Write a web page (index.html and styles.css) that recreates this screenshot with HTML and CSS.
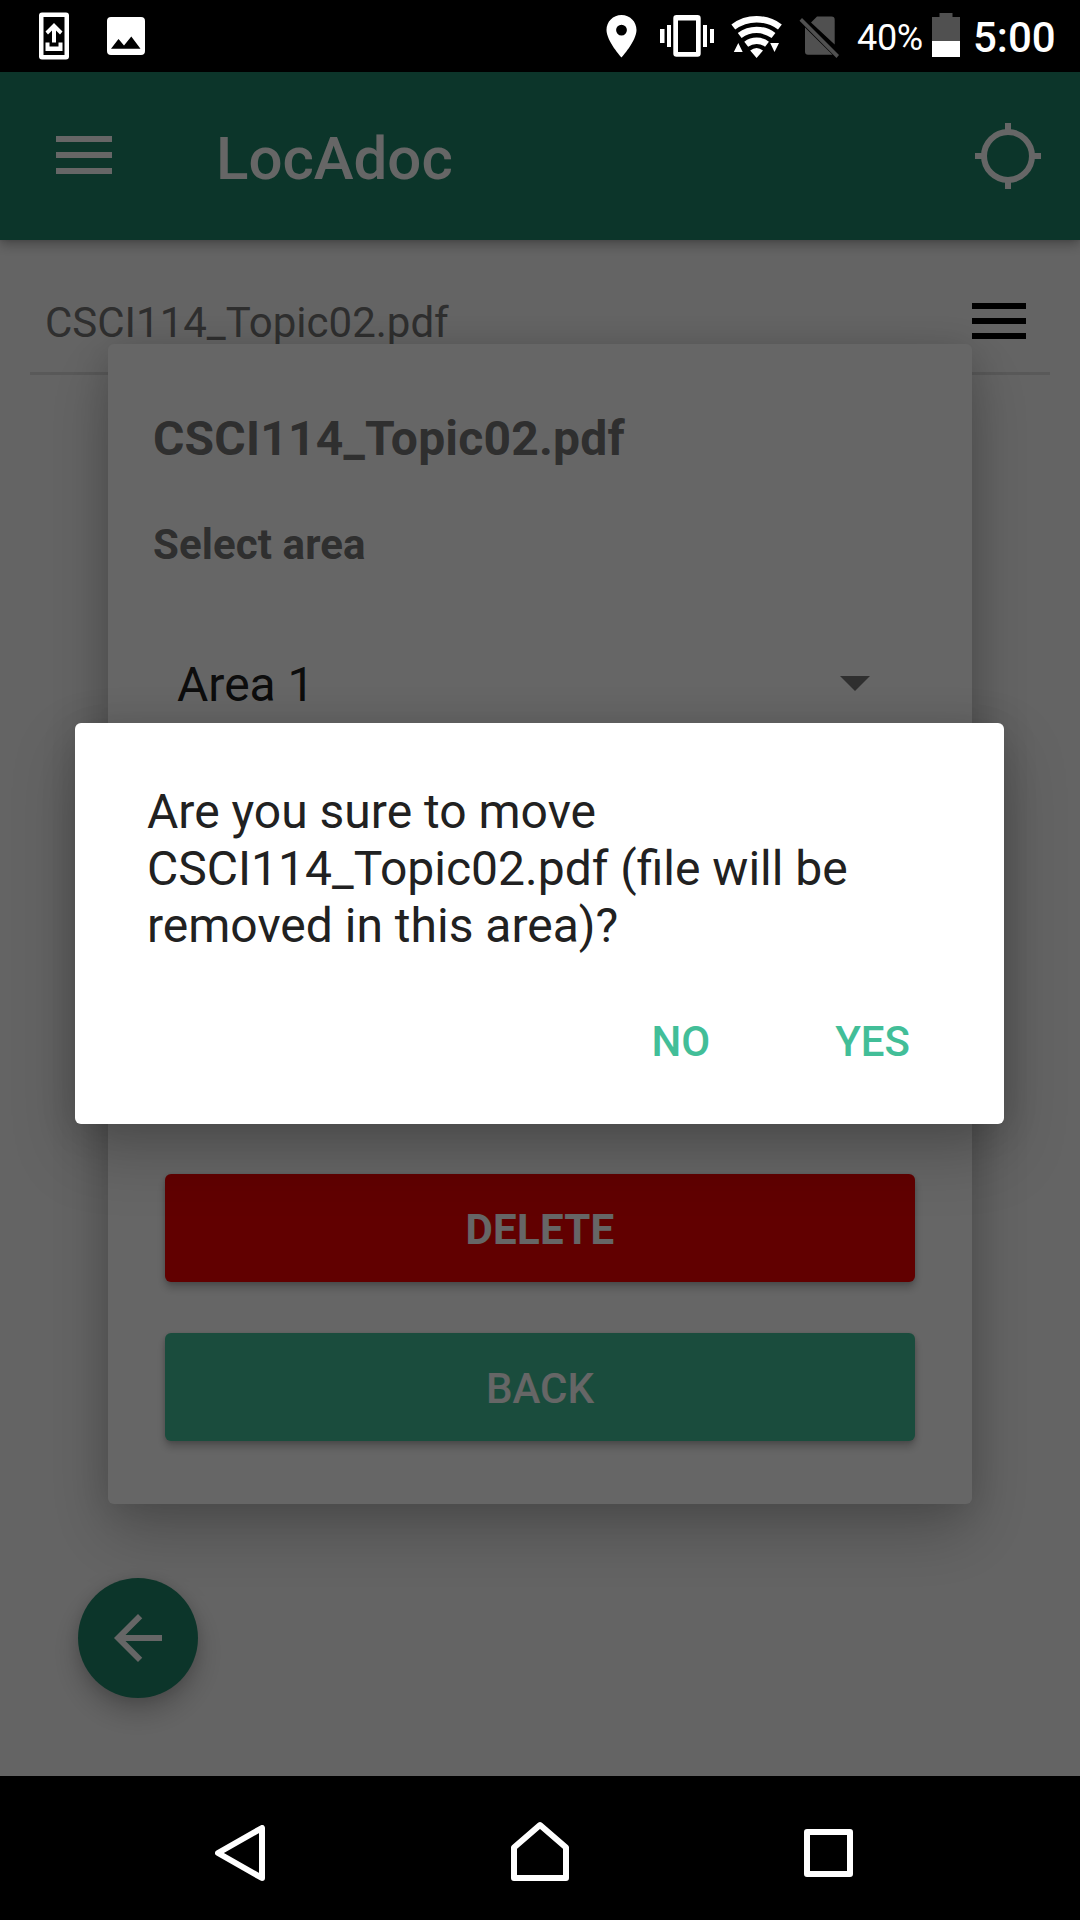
FILE: index.html
```html
<!DOCTYPE html>
<html lang="en">
<head>
<meta charset="utf-8">
<title>LocAdoc</title>
<link rel="stylesheet" href="styles.css">
</head>
<body>
<div class="phone">
  <div class="status-bar">
    <svg class="status-left" width="200" height="72" viewBox="0 0 200 72">
      <path fill="#fff" fill-rule="evenodd" d="M42 12.5H66Q69 12.5 69 15.5V56.5Q69 59.5 66 59.5H42Q39 59.5 39 56.5V15.5Q39 12.5 42 12.5ZM43.5 17V55H64.500V17Z"/>
      <path fill="#fff" d="M54 23L62.500 31.500 60 34.500 56 30.500V42.500H52V30.500L48 34.500 45.500 31.500ZM45.500 42.500H49.500V46.500H58.500V42.500H62.500V51H45.500Z"/>
      <path fill="#fff" fill-rule="evenodd" d="M111 17H141Q145 17 145 21V51Q145 55 141 55H111Q107 55 107 51V21Q107 17 111 17ZM111 48.800H140.500L131.300 36.500 124 45.500 118.500 39Z"/>
    </svg>
    <div class="status-right">
      <svg width="250" height="72" viewBox="590 0 250 72">
        <path fill="#fff" fill-rule="evenodd" d="M621.500 15C613 15 606.500 21.700 606.500 30C606.500 41 621.500 57.500 621.500 57.500S636.500 41 636.500 30C636.500 21.700 630 15 621.500 15ZM621.500 24.700A5.400 5.400 0 1 1 621.500 35.500A5.400 5.400 0 1 1 621.500 24.700Z"/>
        <path fill="#fff" fill-rule="evenodd" d="M676.500 15H697.500Q700.700 15 700.700 18.200V53.500Q700.700 56.700 697.500 56.700H676.500Q673.300 56.700 673.300 53.500V18.200Q673.300 15 676.500 15ZM678 20.500V52H696V20.500Z"/>
        <path fill="#fff" d="M667 25H671V47H667ZM660 29H664.500V43H660ZM703 25H707V47H703ZM710 29H714V43H710Z"/>
        <g fill="none" stroke="#fff" stroke-width="6.400">
          <path d="M733.300 27A38.800 38.800 0 0 1 779.900 27"/>
          <path d="M739.700 35.500A28.200 28.200 0 0 1 773.500 35.500"/>
          <path d="M746.200 44.200A17.300 17.300 0 0 1 767 44.200"/>
        </g>
        <path fill="#fff" d="M756.600 58L750.200 50.500Q756.600 45.500 763 50.500ZM738.300 43L742.700 52H733.800ZM770.200 43H779L774.500 52Z"/>
        <path fill="#505050" d="M817 16.500H831.500Q834.700 16.500 834.700 19.700V44.500L811 22.500ZM805 27.500L832.500 54.700H808Q805 54.700 805 51.700ZM802 18L839 55 836.500 58 799.500 20.800Z"/>
      </svg>
      <span class="battery-level">40%</span>
      <svg class="battery" width="28" height="44" viewBox="0 0 28 44">
        <path fill="#505050" d="M7.500 0H20.500V4H28V28H0V4H7.500Z"/><path fill="#fff" d="M0 28H28V44H0Z"/>
      </svg>
      <span class="clock">5:00</span>
    </div>
  </div>

  <div class="screen">
    <header class="app-bar">
      <svg width="56" height="38" viewBox="0 0 56 38" fill="#fff"><path d="M0 0H56V6H0ZM0 16H56V22H0ZM0 32H56V38H0Z"/></svg>
      <h1 class="app-title">LocAdoc</h1>
      <svg class="locate" width="66" height="66" viewBox="0 0 66 66" fill="none" stroke="#fff" stroke-width="6"><circle cx="33" cy="33" r="24"/><path d="M33 0V7M33 59V66M0 33H7M59 33H66"/></svg>
    </header>
    <div class="file-row">
      <span class="file-name">CSCI114_Topic02.pdf</span>
      <svg width="54" height="36" viewBox="0 0 54 36"><path d="M0 0H54V6H0ZM0 15H54V21H0ZM0 30H54V36H0Z"/></svg>
    </div>

    <button class="fab" type="button"><svg width="72" height="72" viewBox="0 0 24 24" fill="#fff"><path d="M20 11H7.830l5.590-5.590L12 4l-8 8 8 8 1.410-1.410L7.830 13H20v-2z"/></svg></button>

    <section class="sheet">
      <h2 class="sheet-title">CSCI114_Topic02.pdf</h2>
      <h3 class="sheet-label">Select area</h3>
      <div class="area-select">
        <span class="area-value">Area 1</span>
        <svg width="30" height="15" viewBox="0 0 30 15" fill="#757575"><path d="M0 0H30L15 15Z"/></svg>
      </div>
      <div class="sheet-buttons">
        <button class="btn btn-delete" type="button">DELETE</button>
        <button class="btn btn-back" type="button">BACK</button>
      </div>
    </section>

    <div class="scrim"></div>

    <div class="dialog">
      <p class="message">Are you sure to move<br>CSCI114_Topic02.pdf (file will be<br>removed in this area)?</p>
      <div class="actions">
        <button class="action" type="button">NO</button>
        <button class="action" type="button">YES</button>
      </div>
    </div>
  </div>

  <nav class="nav-bar">
    <svg width="50" height="56" viewBox="0 0 50 56"><path d="M47 3V53L3 28Z"/></svg>
    <svg class="home" width="58" height="60" viewBox="0 0 58 60"><path d="M3 57V26.500L29 4 55 26.500V57Z"/></svg>
    <svg width="49" height="48" viewBox="0 0 49 48"><path d="M3 3H46V45H3Z"/></svg>
  </nav>
</div>
</body>
</html>
```

FILE: styles.css
```css
* { box-sizing: border-box; }

body {
  margin: 0;
  font-family: Roboto, "Liberation Sans", sans-serif;
}

h1, h2, h3, p { margin: 0; }
svg { display: block; flex: none; }
button { border: 0; padding: 0; font-family: inherit; }

.phone {
  width: 1080px;
  height: 1920px;
  display: flex;
  flex-direction: column;
  overflow: hidden;
  background: #000;
}

/* System status bar */
.status-bar {
  height: 72px;
  flex: none;
  display: flex;
  justify-content: space-between;
  color: #fff;
}
.status-right {
  display: flex;
  padding-right: 25px;
  line-height: 72px;
}
.battery-level {
  width: 75px;
  margin-left: 17px;
  font-size: 36px;
  line-height: 76px;
  letter-spacing: -0.3px;
}
.battery { margin-top: 13px; }
.clock {
  width: 82px;
  margin-left: 13px;
  font-size: 42px;
  font-weight: 500;
  line-height: 75px;
}

/* App content */
.screen {
  position: relative;
  height: 1704px;
  flex: none;
  background: #fafafa;
  overflow: hidden;
}
.app-bar {
  position: relative;
  height: 168px;
  padding: 0 39px 0 56px;
  display: flex;
  align-items: center;
  background: #20866a;
  box-shadow: 0 4px 12px rgba(0, 0, 0, 0.32), 0 0 4px rgba(0, 0, 0, 0.12);
  color: #fff;
}
.app-bar > svg:first-child { margin-bottom: 2px; }
.app-title {
  margin-left: 104px;
  padding-top: 6px;
  font-size: 60px;
  font-weight: 500;
  line-height: 70px;
}
.locate { margin-left: auto; }

.file-row {
  height: 135px;
  margin: 0 30px;
  padding: 58px 24px 0 15px;
  display: flex;
  align-items: flex-start;
  justify-content: space-between;
  border-bottom: 3px solid #dedede;
  color: #757575;
  font-size: 42px;
  line-height: 50px;
}
.file-row svg { margin-top: 5px; fill: #000; }

.fab {
  position: absolute;
  left: 78px;
  bottom: 78px;
  width: 120px;
  height: 120px;
  display: grid;
  place-items: center;
  border-radius: 50%;
  background: #20866a;
  box-shadow: 0 14px 28px rgba(0, 0, 0, 0.22), 0 2px 14px rgba(0, 0, 0, 0.12);
}

.sheet {
  position: absolute;
  left: 108px;
  top: 272px;
  width: 864px;
  height: 1160px;
  padding: 67px 57px 63px;
  display: flex;
  flex-direction: column;
  border-radius: 6px;
  background: #fff;
  box-shadow: 0 28px 64px rgba(0, 0, 0, 0.22), 0 4px 36px rgba(0, 0, 0, 0.12);
  color: #757575;
}
.sheet-title {
  margin-left: -12px;
  font-size: 48px;
  font-weight: 700;
  line-height: 56px;
  letter-spacing: 0.2px;
}
.sheet-label {
  margin: 53px 0 0 -12px;
  font-size: 42px;
  font-weight: 700;
  line-height: 50px;
  letter-spacing: 0.1px;
}
.area-select {
  margin: 85px 45px 0 12px;
  display: flex;
  align-items: center;
  justify-content: space-between;
  color: #212121;
  font-size: 48px;
  line-height: 56px;
}
.area-value {
  margin-bottom: -2px;
  padding-top: 2px;
}
.sheet-buttons {
  margin-top: auto;
  display: flex;
  flex-direction: column;
  gap: 51px;
}
.btn {
  height: 108px;
  padding-top: 3px;
  border-radius: 6px;
  color: #fff;
  font-size: 42px;
  box-shadow: 0 6px 8px rgba(0, 0, 0, 0.22), 0 1px 4px rgba(0, 0, 0, 0.14);
}
.btn-delete { background: #f30000; font-weight: 700; letter-spacing: 0.3px; }
.btn-back { background: #42be98; font-weight: 500; }

.scrim {
  position: absolute;
  inset: 0;
  background: rgba(0, 0, 0, 0.6);
}

/* Confirmation dialog */
.dialog {
  position: absolute;
  left: 75px;
  top: 651px;
  width: 929px;
  height: 401px;
  padding: 60px 94px 0 72px;
  border-radius: 6px;
  background: #fff;
  box-shadow: 0 28px 64px rgba(0, 0, 0, 0.22), 0 4px 36px rgba(0, 0, 0, 0.12);
}
.message {
  color: #212121;
  font-size: 48px;
  line-height: 57px;
  white-space: nowrap;
}
.actions {
  margin-top: 63px;
  display: flex;
  justify-content: flex-end;
  gap: 125px;
}
.action {
  background: none;
  color: #42be98;
  font-size: 42px;
  font-weight: 500;
  line-height: 50px;
}

/* System navigation */
.nav-bar {
  height: 144px;
  padding: 9px 227px 0 215px;
  display: flex;
  align-items: center;
}
.nav-bar path {
  fill: none;
  stroke: #fff;
  stroke-width: 6;
  stroke-linejoin: round;
}
.home { margin: -3px 235px 0 246px; }
```
